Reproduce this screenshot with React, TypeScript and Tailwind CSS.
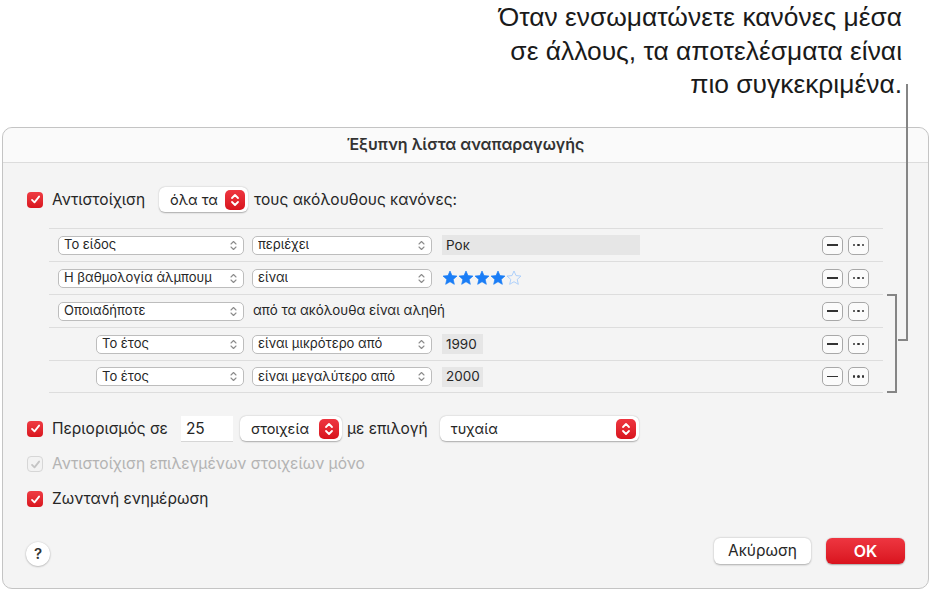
import type { ReactNode } from "react";

const UI = { fontFamily: '"Inter", "Noto Sans", sans-serif' };

function Check({ disabled = false }: { disabled?: boolean }) {
  return (
    <span
      className={`flex h-[16px] w-[16px] shrink-0 items-center justify-center rounded-[4px] ${
        disabled
          ? "border border-[#d6d6d6] bg-[#f2f2f2]"
          : "bg-gradient-to-b from-[#ef3b43] to-[#d9141d]"
      }`}
    >
      <svg width="11" height="11" viewBox="0 0 12 12">
        <path
          d="M2.2 6.4 L4.9 9.1 L9.9 2.8"
          fill="none"
          stroke={disabled ? "#c4c4c4" : "#ffffff"}
          strokeWidth="2"
          strokeLinecap="round"
          strokeLinejoin="round"
        />
      </svg>
    </span>
  );
}

function RedStepper() {
  return (
    <span className="flex h-[20px] w-[20px] items-center justify-center rounded-[5px] bg-gradient-to-b from-[#ee3540] to-[#d8121c]">
      <svg width="10" height="14" viewBox="0 0 10 14">
        <path
          d="M2 5 L5 2 L8 5 M2 9 L5 12 L8 9"
          fill="none"
          stroke="#fff"
          strokeWidth="1.8"
          strokeLinecap="round"
          strokeLinejoin="round"
        />
      </svg>
    </span>
  );
}

function Popup({ label, width }: { label: string; width: string }) {
  return (
    <div
      className={`flex h-[25px] ${width} items-center justify-between rounded-[6px] bg-white pl-[11px] pr-[3px] text-[14.5px] text-[#262626] shadow-[0_0.5px_1.5px_rgba(0,0,0,0.3)]`}
    >
      <span>{label}</span>
      <RedStepper />
    </div>
  );
}

function SmallSelect({ label, width }: { label: string; width: string }) {
  return (
    <div
      className={`flex h-[19px] ${width} shrink-0 items-center justify-between rounded-[5px] border border-[#bdbdbd] bg-white pl-[5px] pr-[6px] text-[13px] text-[#262626]`}
    >
      <span className="truncate">{label}</span>
      <svg width="7" height="11" viewBox="0 0 7 11">
        <path
          d="M1 4 L3.5 1.5 L6 4 M1 7 L3.5 9.5 L6 7"
          fill="none"
          stroke="#8c8c8c"
          strokeWidth="1.1"
          strokeLinecap="round"
          strokeLinejoin="round"
        />
      </svg>
    </div>
  );
}

function Field({ value, width }: { value: string; width: string }) {
  return (
    <div className={`flex h-[20px] ${width} items-center bg-[#e6e6e6] pl-[4px] text-[13.5px] text-[#262626]`}>
      {value}
    </div>
  );
}

function Star({ filled }: { filled: boolean }) {
  return (
    <svg width="16" height="16" viewBox="0 0 24 24">
      <path
        d="M12 1.5 L15 8.4 L22.5 9.1 L16.8 14.1 L18.5 21.5 L12 17.6 L5.5 21.5 L7.2 14.1 L1.5 9.1 L9 8.4 Z"
        fill={filled ? "#1a7df6" : "none"}
        stroke={filled ? "#1a7df6" : "#a9cdfb"}
        strokeWidth={filled ? 1 : 1.4}
        strokeLinejoin="round"
      />
    </svg>
  );
}

function RuleButtons() {
  return (
    <div className="ml-auto flex gap-[5px] pr-[14px]">
      <span className="flex h-[19px] w-[21px] items-center justify-center rounded-[5px] border border-[#a8a8a8] bg-[#fbfbfb]">
        <span className="h-[1.5px] w-[11px] bg-[#333]" />
      </span>
      <span className="flex h-[19px] w-[21px] items-center justify-center gap-[2px] rounded-[5px] border border-[#a8a8a8] bg-[#fbfbfb]">
        <span className="h-[2.5px] w-[2.5px] rounded-full bg-[#333]" />
        <span className="h-[2.5px] w-[2.5px] rounded-full bg-[#333]" />
        <span className="h-[2.5px] w-[2.5px] rounded-full bg-[#333]" />
      </span>
    </div>
  );
}

function Rule({ children, indent = false, last = false }: { children: ReactNode; indent?: boolean; last?: boolean }) {
  return (
    <div
      className={`flex h-[33px] items-center border-t border-[#dddddd] ${last ? "border-b" : ""} ${
        indent ? "pl-[47px]" : "pl-[9px]"
      }`}
    >
      {children}
      <RuleButtons />
    </div>
  );
}

export default function App() {
  return (
    <div className="relative h-[591px] w-[931px] overflow-hidden bg-white">
      <div
        className="h-[127px] pr-[29px] pt-[1px] text-right text-[26.4px] leading-[33.5px] text-[#1a1a1a]"
        style={{ fontFamily: '"Liberation Sans", Arial, sans-serif' }}
      >
        <p>Όταν ενσωματώνετε κανόνες μέσα</p>
        <p>σε άλλους, τα αποτελέσματα είναι</p>
        <p>πιο συγκεκριμένα.</p>
      </div>

      <div
        className="mx-[2px] flex h-[462px] flex-col rounded-[10px] border border-[#c4c4c4] bg-[#f4f4f4]"
        style={UI}
      >
        <div className="flex h-[35px] shrink-0 items-center justify-center rounded-t-[10px] border-b border-[#dcdcdc] bg-[#fafafa] pb-[3px] text-[16px] font-semibold text-[#333]">
          Έξυπνη λίστα αναπαραγωγής
        </div>

        <div className="flex flex-col pl-[24px] pt-[24px] text-[15.5px] text-[#262626]">
          <div className="flex h-[25px] items-center">
            <Check />
            <span className="ml-[9px]">Αντιστοίχιση</span>
            <div className="ml-[14px]">
              <Popup label="όλα τα" width="w-[89px]" />
            </div>
            <span className="ml-[6px]">τους ακόλουθους κανόνες:</span>
          </div>

          <div className="ml-[22px] mt-[16px] w-[834px]">
            <Rule>
              <SmallSelect label="Το είδος" width="w-[186px]" />
              <div className="ml-[8px]">
                <SmallSelect label="περιέχει" width="w-[180px]" />
              </div>
              <div className="ml-[10px]">
                <Field value="Ροκ" width="w-[198px]" />
              </div>
            </Rule>
            <Rule>
              <SmallSelect label="Η βαθμολογία άλμπουμ" width="w-[186px]" />
              <div className="ml-[8px]">
                <SmallSelect label="είναι" width="w-[180px]" />
              </div>
              <div className="ml-[10px] flex">
                <Star filled />
                <Star filled />
                <Star filled />
                <Star filled />
                <Star filled={false} />
              </div>
            </Rule>
            <Rule>
              <SmallSelect label="Οποιαδήποτε" width="w-[186px]" />
              <span className="ml-[9px] text-[13.3px]">από τα ακόλουθα είναι αληθή</span>
            </Rule>
            <Rule indent>
              <SmallSelect label="Το έτος" width="w-[148px]" />
              <div className="ml-[8px]">
                <SmallSelect label="είναι μικρότερο από" width="w-[180px]" />
              </div>
              <div className="ml-[10px]">
                <Field value="1990" width="w-[41px]" />
              </div>
            </Rule>
            <Rule indent last>
              <SmallSelect label="Το έτος" width="w-[148px]" />
              <div className="ml-[8px]">
                <SmallSelect label="είναι μεγαλύτερο από" width="w-[180px]" />
              </div>
              <div className="ml-[10px]">
                <Field value="2000" width="w-[41px]" />
              </div>
            </Rule>
          </div>

          <div className="mt-[23px] flex h-[25px] items-center">
            <Check />
            <span className="ml-[9px]">Περιορισμός σε</span>
            <div className="ml-[13px] flex h-[25px] w-[52px] items-center bg-white pl-[5px] shadow-[0_1px_0_rgba(0,0,0,0.12)]">
              25
            </div>
            <div className="ml-[7px]">
              <Popup label="στοιχεία" width="w-[102px]" />
            </div>
            <span className="ml-[5px]">με επιλογή</span>
            <div className="ml-[12px]">
              <Popup label="τυχαία" width="w-[199px]" />
            </div>
          </div>

          <div className="mt-[13px] flex h-[20px] items-center text-[#b3b3b3]">
            <Check disabled />
            <span className="ml-[9px]">Αντιστοίχιση επιλεγμένων στοιχείων μόνο</span>
          </div>

          <div className="mt-[15px] flex h-[20px] items-center">
            <Check />
            <span className="ml-[9px]">Ζωντανή ενημέρωση</span>
          </div>

          <div className="mt-[29px] flex h-[28px] items-start pr-[23px]">
            <span className="-ml-px mt-[4px] flex h-[24px] w-[24px] items-center justify-center rounded-full bg-white text-[15px] font-semibold text-[#333] shadow-[0_0.5px_2px_rgba(0,0,0,0.35)]">
              ?
            </span>
            <div className="ml-auto flex gap-[15px]">
              <span className="flex h-[26px] w-[97px] items-center justify-center rounded-[6px] bg-white shadow-[0_0.5px_2px_rgba(0,0,0,0.3)]">
                Ακύρωση
              </span>
              <span className="flex h-[26px] w-[79px] items-center justify-center rounded-[6px] bg-gradient-to-b from-[#ee3540] to-[#d9121d] text-[16px] font-semibold text-white shadow-[0_0.5px_1.5px_rgba(0,0,0,0.3)]">
                OK
              </span>
            </div>
          </div>
        </div>
      </div>

      <svg className="pointer-events-none absolute left-0 top-0" width="931" height="591">
        <polyline points="907,84 907,340 898,340" fill="none" stroke="#858585" strokeWidth="2" />
        <polyline points="887,295 896,295 896,392 887,392" fill="none" stroke="#858585" strokeWidth="2" />
      </svg>
    </div>
  );
}
